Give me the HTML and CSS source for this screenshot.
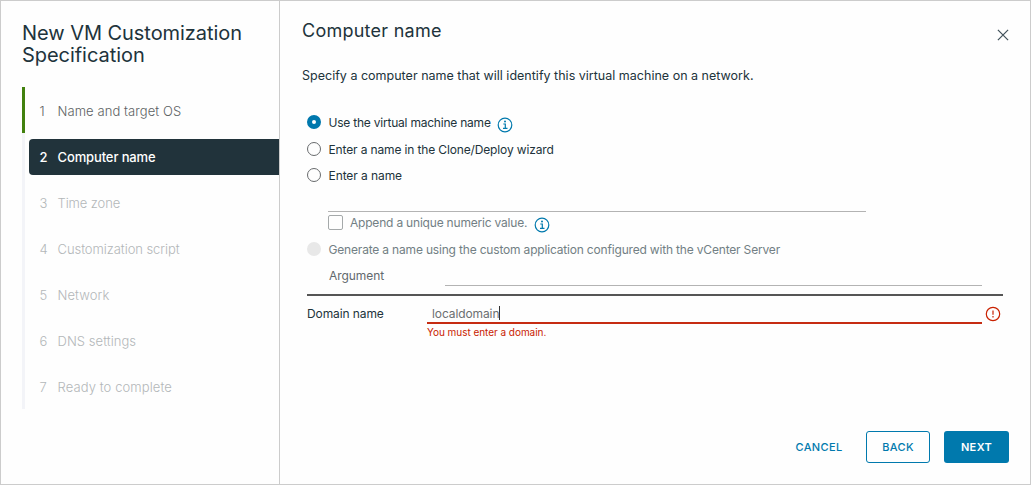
FILE: index.html
```html
<!DOCTYPE html>
<html lang="en">
<head>
<meta charset="utf-8">
<title>New VM Customization Specification</title>
<link rel="stylesheet" href="styles.css">
</head>
<body>
<div class="wizard">
  <aside class="sidebar">
    <h1 class="wizard-title"><span class="title-first">New VM Customization</span><br><span class="title-second">Specification</span></h1>
    <ol class="steps">
      <li class="step done"><div class="step-link"><span class="num">1</span><span class="s1">Name and target OS</span></div></li>
      <li class="step active"><div class="step-link"><span class="num">2</span><span class="s2">Computer name</span></div></li>
      <li class="step"><div class="step-link"><span class="num">3</span><span class="s3">Time zone</span></div></li>
      <li class="step"><div class="step-link"><span class="num">4</span><span class="s4">Customization script</span></div></li>
      <li class="step"><div class="step-link"><span class="num">5</span><span class="s5">Network</span></div></li>
      <li class="step"><div class="step-link"><span class="num">6</span><span class="s6">DNS settings</span></div></li>
      <li class="step"><div class="step-link"><span class="num">7</span><span class="s7">Ready to complete</span></div></li>
    </ol>
  </aside>
  <main class="content">
    <header class="page-header">
      <h2 class="page-title">Computer name</h2>
      <svg class="close" width="12" height="12" viewBox="0 0 12 12"><path d="M.9.9l10.2 10.2M11.1.9L.9 11.1"/></svg>
    </header>
    <p class="intro"><span>Specify a computer name that will identify this virtual machine on a network.</span></p>
    <form class="form">
      <div class="row r1"><span class="radio checked"></span><span class="label t1">Use the virtual machine name</span>
        <svg class="info" width="16" height="16" viewBox="0 0 16 16"><circle cx="8" cy="8" r="6.8"/><path d="M6.3 7h2v4.4M6 11.4h4.5"/><circle class="dot" cx="8" cy="4.5" r="1"/></svg></div>
      <div class="row r2"><span class="radio"></span><span class="label t2">Enter a name in the Clone/Deploy wizard</span></div>
      <div class="row r3"><span class="radio"></span><span class="label t3">Enter a name</span></div>
      <div class="name-input"></div>
      <div class="row r4 muted"><span class="checkbox"></span><span class="label t4">Append a unique numeric value.</span>
        <svg class="info" width="16" height="16" viewBox="0 0 16 16"><circle cx="8" cy="8" r="6.8"/><path d="M6.3 7h2v4.4M6 11.4h4.5"/><circle class="dot" cx="8" cy="4.5" r="1"/></svg></div>
      <div class="row r5 muted"><span class="radio disabled"></span><span class="label t5">Generate a name using the custom application configured with the vCenter Server</span></div>
      <div class="argument"><span class="argument-label"><span class="t6">Argument</span></span><span class="argument-input"></span></div>
      <div class="divider"></div>
      <div class="domain">
        <span class="domain-label"><span class="t7">Domain name</span></span>
        <div class="domain-input"><span class="t8">localdomain</span><i class="caret"></i></div>
        <svg class="error-icon" width="16" height="16" viewBox="0 0 16 16"><circle cx="8" cy="8" r="6.7"/><path d="M8 4.5v4.3M8 10.1v1.5"/></svg>
      </div>
      <div class="error"><span>You must enter a domain.</span></div>
    </form>
    <footer class="actions">
      <span class="btn cancel"><span>CANCEL</span></span>
      <span class="btn back"><span>BACK</span></span>
      <span class="btn next"><span>NEXT</span></span>
    </footer>
  </main>
</div>
</body>
</html>
```
FILE: styles.css
```css
* { box-sizing: border-box; }
body { margin: 0; font: 400 13px/20px Inter, "Liberation Sans", sans-serif; color: #21333b; background: #fff; }
h1, h2, p, ol { margin: 0; padding: 0; }
span { white-space: nowrap; }
.wizard { display: flex; width: 1031px; height: 485px; border: 1px solid #ccc; background: #fefefe; }
.sidebar { width: 279px; border-right: 1px solid #ccc; padding: 21px 0 0 21px; flex: none; }
.wizard-title { font-size: 20px; line-height: 22px; font-weight: 400; height: 65px; letter-spacing: -.05px; }
.steps { list-style: none; }
.step { height: 46px; padding: 6px 0 4px 4px; border-left: 3px solid #f3f4f8; color: #b3b7b9; font-weight: 300; }
.step-link { height: 36px; display: flex; align-items: center; padding: 0 0 1px 10.5px; border-radius: 4px 0 0 4px; }
.num { width: 18px; flex: none; }
.s1 { letter-spacing: .08px; }
.s3 { letter-spacing: -.1px; }
.s4 { letter-spacing: -.06px; }
.s5 { letter-spacing: .1px; }
.s6 { letter-spacing: .05px; }
.s7 { letter-spacing: .1px; }
.done { border-left-color: #42810e; color: #5d6264; }
.active { color: #fff; font-weight: 500; }
.active .step-link { background: #21333b; }
.s2 { letter-spacing: -.12px; }
.content { flex: 1; display: flex; flex-direction: column; }
.page-header { display: flex; justify-content: space-between; padding: 18px 21px 0 22px; height: 62px; }
.page-title { font-size: 18px; line-height: 24px; font-weight: 400; letter-spacing: .25px; }
.close { margin-top: 10px; fill: none; stroke: #40515a; stroke-width: 1.2; }
.intro { padding: 3px 0 0 22px; height: 45px; font-size: 12.5px; letter-spacing: .01px; }
.form { padding-left: 27px; font-size: 12px; letter-spacing: -.2px; }
.row { display: flex; align-items: center; height: 26px; }
.row .info { margin: 5px 0 0 6.5px; }
.label { padding-top: 1px; }
.r1 { height: 28px; }
.radio { width: 14px; height: 14px; border: 1px solid #686b6d; border-radius: 50%; margin-right: 7.5px; flex: none; }
.radio.checked { border: 5px solid #0078ad; background: #fff; }
.radio.disabled { border: 0; background: #e8e8e8; }
.t1 { letter-spacing: -.22px; }
.t2 { letter-spacing: -.14px; }
.t3 { letter-spacing: -.08px; }
.t5 { letter-spacing: -.18px; }
.t6 { letter-spacing: -.06px; }
.t7 { letter-spacing: -.1px; }
.t8 { letter-spacing: -.1px; }
.name-input { width: 538px; height: 24px; margin-left: 21px; border-bottom: 1px solid #b3b3b3; }
.r4 { padding: 0 0 3px 21px; height: 23px; }
.r5 { height: 28px; }
.checkbox { width: 15px; height: 15px; border: 1px solid #a5a9aa; border-radius: 2px; margin-right: 7px; }
.muted { color: #727f84; }
.info { fill: none; stroke: #0079ad; stroke-width: 1.2; flex: none; }
.info .dot { fill: #0079ad; stroke: none; }
.argument { display: flex; height: 23px; margin-left: 22px; color: #62696d; }
.argument-label { width: 116px; padding-top: 3px; }
.argument-input { width: 537px; border-bottom: 1px solid #b3b3b3; }
.divider { width: 696px; height: 2px; margin-top: 8px; background: #555; }
.domain { display: flex; height: 28px; }
.domain-label { width: 120px; padding-top: 8px; }
.domain-input { width: 555px; display: flex; align-items: flex-start; padding: 8px 0 0 5px; border-bottom: 2px solid #c62c12; color: #6b6f71; }
.caret { width: 1px; height: 14px; margin-top: 2px; background: #333; }
.error-icon { margin: 10px 0 0 3px; fill: none; stroke: #c92100; stroke-width: 1.2; }
.error { padding-left: 120px; height: 18px; font-size: 10px; line-height: 17px; letter-spacing: -.04px; color: #c92100; }
.actions { display: flex; justify-content: flex-end; margin: auto 21px 21px 0; }
.btn { display: flex; align-items: center; justify-content: center; height: 32px; font-size: 11px; letter-spacing: .35px; border-radius: 3px; color: #0079ad; font-weight: 500; }
.cancel { width: 74px; margin-right: 10px; }
.back { width: 64px; margin-right: 14px; border: 1px solid #0079ad; }
.next { width: 65px; background: #0079ad; color: #fff; font-weight: 600; }
```
